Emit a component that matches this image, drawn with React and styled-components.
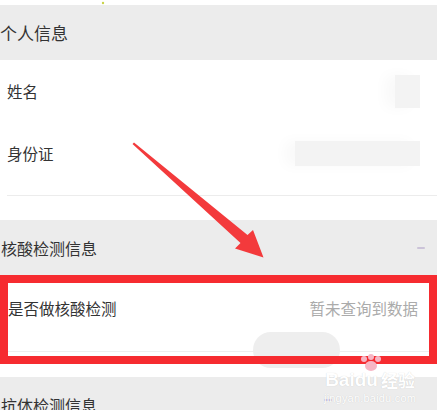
import styled, { createGlobalStyle } from "styled-components";

const GlobalStyle = createGlobalStyle`
  html, body {
    margin: 0;
    padding: 0;
    background: #fff;
    font-family: "Noto Sans CJK SC", "Noto Sans", sans-serif;
  }
`;

const Page = styled.div`
  position: relative;
  width: 442px;
  height: 410px;
  overflow: hidden;
  background: #fff;
  padding-top: 5px;
  box-sizing: border-box;
`;

const SectionHeader = styled.div`
  display: flex;
  align-items: center;
  justify-content: space-between;
  width: 437px;
  height: ${(p) => p.h || 55}px;
  padding: 0 12px 0 ${(p) => p.pl || 0}px;
  box-sizing: border-box;
  background: #ececec;
  color: #333;
  font-size: ${(p) => p.size || 16}px;
  flex-shrink: 0;
`;

const Dash = styled.span`
  width: 8px;
  height: 2px;
  border-radius: 1px;
  background: #cbc3d8;
`;

const Row = styled.div`
  display: flex;
  align-items: center;
  justify-content: space-between;
  width: 437px;
  height: 62px;
  padding: 0 17px 0 7px;
  box-sizing: border-box;
  color: #333;
  font-size: 15.5px;
`;

const Masked = styled.span`
  width: ${(p) => p.w}px;
  height: ${(p) => p.h}px;
  background: #f3f3f3;
  box-shadow: -10px 0 14px #f9f9f9;
`;

const Divider = styled.div`
  width: 430px;
  height: 1px;
  margin: 11px 0 24px 7px;
  background: #ececec;
`;

const Highlight = styled.div`
  position: relative;
  width: 437px;
  height: 89px;
  padding: 8px;
  box-sizing: border-box;
  display: flex;
  flex-direction: column;
  &::after {
    content: "";
    position: absolute;
    inset: 0;
    border: 8px solid #f62b30;
    z-index: 2;
  }
`;

const HighlightRow = styled.div`
  display: flex;
  align-items: center;
  justify-content: space-between;
  height: 50px;
  padding-right: 11px;
  color: #333;
  font-size: 15.5px;
`;

const Value = styled.span`
  color: #ababab;
`;

const InnerLine = styled.div`
  height: 1px;
  margin-top: 18px;
  background: #eeeeee;
`;

const Pill = styled.div`
  position: absolute;
  left: 253px;
  top: 57px;
  width: 87px;
  height: 36px;
  border-radius: 18px;
  background: #eeeeee;
  z-index: 1;
`;

const Gap = styled.div`
  height: 13px;
`;

const Overlay = styled.svg`
  position: absolute;
  left: 0;
  top: 0;
  pointer-events: none;
  z-index: 5;
`;

const Watermark = styled.div`
  position: absolute;
  left: 324px;
  top: 354px;
  display: flex;
  flex-direction: column;
  align-items: center;
  color: #fff;
  z-index: 6;
  text-shadow: 0 0 1px rgba(0, 0, 0, 0.18);
`;

const Brand = styled.div`
  display: flex;
  align-items: flex-end;
  font-family: "Liberation Sans", "Noto Sans CJK SC", sans-serif;
  font-size: 19px;
  font-weight: 700;
  line-height: 20px;
`;

const BrandCn = styled.span`
  font-family: "Noto Sans CJK SC", sans-serif;
  font-size: 17px;
  margin-left: 3px;
`;

const Paw = styled.svg`
  margin: 0 0 -2px 1px;
`;

const Site = styled.div`
  font-family: "Liberation Sans", sans-serif;
  font-size: 11px;
  line-height: 13px;
  margin-top: 2px;
  letter-spacing: 0.2px;
`;

export default function App() {
  return (
    <>
      <GlobalStyle />
      <Page>
        <SectionHeader size={17}>个人信息</SectionHeader>
        <Row>
          姓名
          <Masked w={25} h={33} />
        </Row>
        <Row>
          身份证
          <Masked w={125} h={25} />
        </Row>
        <Divider />
        <SectionHeader pl={1}>
          核酸检测信息
          <Dash />
        </SectionHeader>
        <Highlight>
          <HighlightRow>
            是否做核酸检测
            <Value>暂未查询到数据</Value>
          </HighlightRow>
          <InnerLine />
          <Pill />
        </Highlight>
        <Gap />
        <SectionHeader pl={1}>抗体检测信息</SectionHeader>

        <Overlay width="442" height="410" viewBox="0 0 442 410">
          <polygon
            points="132.5,144 240.5,243 235,248.5 263.5,257.5 253,230 247.5,235 134,142.5"
            fill="#f33a3c"
          />
          <circle cx="103" cy="3" r="1.2" fill="#c9d34a" />
          <rect x="324" y="399" width="8" height="2" rx="1" fill="#c9bfe0" />
        </Overlay>

        <Watermark>
          <Paw width="26" height="18" viewBox="0 0 26 18">
            <circle cx="6" cy="5" r="3" fill="#f6b6c4" />
            <circle cx="13" cy="3" r="3" fill="#f6b6c4" />
            <circle cx="20" cy="5" r="3" fill="#f6b6c4" />
            <ellipse cx="13" cy="12" rx="6" ry="5" fill="#f6b6c4" />
          </Paw>
          <Brand>
            Bai<span>du</span>
            <BrandCn>经验</BrandCn>
          </Brand>
          <Site>jingyan.baidu.com</Site>
        </Watermark>
      </Page>
    </>
  );
}
